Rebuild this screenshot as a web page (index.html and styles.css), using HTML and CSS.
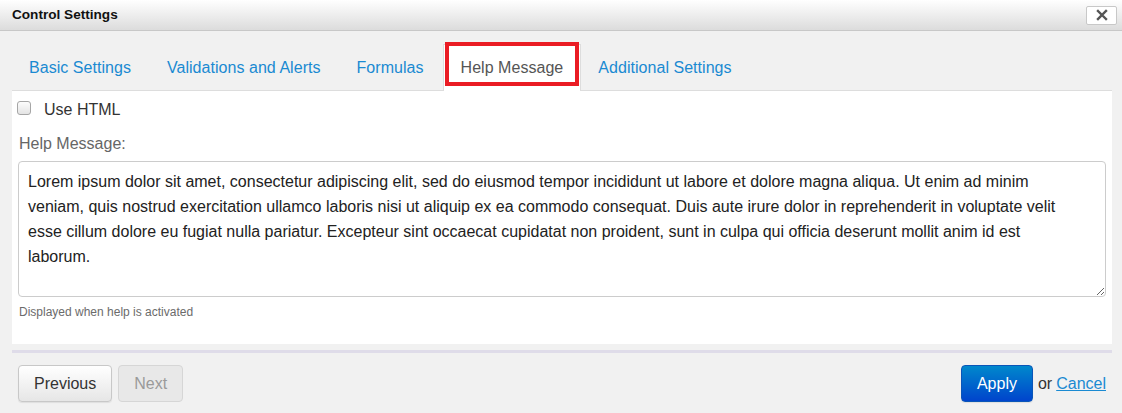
FILE: index.html
```html
<!DOCTYPE html>
<html>
<head>
<meta charset="utf-8">
<link rel="stylesheet" href="styles.css">
</head>
<body>
<div class="dialog">
  <div class="titlebar">
    <span class="title">Control Settings</span>
    <button class="close" aria-label="Close">
      <svg width="12" height="12" viewBox="0 0 12 12"><path d="M2 2 L10 10 M10 2 L2 10" stroke="#555" stroke-width="2.4" stroke-linecap="square"/></svg>
    </button>
  </div>
  <div class="content">
    <ul class="tabs">
      <li class="tab">Basic Settings</li>
      <li class="tab">Validations and Alerts</li>
      <li class="tab">Formulas</li>
      <li class="tab active">Help Message<span class="highlight"></span></li>
      <li class="tab">Additional Settings</li>
    </ul>
    <div class="panel">
      <label class="check-row"><span class="checkbox"></span><span class="check-text">Use HTML</span></label>
      <div class="field-label">Help Message:</div>
      <textarea class="message">Lorem ipsum dolor sit amet, consectetur adipiscing elit, sed do eiusmod tempor incididunt ut labore et dolore magna aliqua. Ut enim ad minim veniam, quis nostrud exercitation ullamco laboris nisi ut aliquip ex ea commodo consequat. Duis aute irure dolor in reprehenderit in voluptate velit esse cillum dolore eu fugiat nulla pariatur. Excepteur sint occaecat cupidatat non proident, sunt in culpa qui officia deserunt mollit anim id est laborum.</textarea>
      <div class="hint">Displayed when help is activated</div>
    </div>
    <div class="separator"></div>
    <div class="footer">
      <div class="nav">
        <button class="btn">Previous</button>
        <button class="btn disabled">Next</button>
      </div>
      <div class="actions">
        <button class="btn primary">Apply</button>
        <span class="or">or</span>
        <a class="cancel" href="#">Cancel</a>
      </div>
    </div>
  </div>
</div>
</body>
</html>
```

FILE: styles.css
```css
* { box-sizing: border-box; }
html, body { margin: 0; padding: 0; }
body {
  background: #f1f1f1;
  font-family: "Liberation Sans", Arial, sans-serif;
  width: 1122px;
  height: 413px;
  overflow: hidden;
}
.dialog { width: 1122px; }
.titlebar {
  height: 31px;
  background: linear-gradient(#ffffff, #dcdcdc);
  border-bottom: 1px solid #c8c8c8;
  display: flex;
  align-items: center;
  justify-content: space-between;
  padding: 0 5px 1px 12px;
}
.title {
  font-weight: bold;
  font-size: 13.6px;
  color: #111;
}
.close {
  width: 31px;
  height: 19px;
  background: #fff;
  border: 1px solid #c8c8c8;
  border-radius: 2px;
  padding: 0;
  display: flex;
  align-items: center;
  justify-content: center;
  margin-top: 1px;
}
.content { padding: 0 10px 0 12px; }
.tabs {
  list-style: none;
  margin: 13px 0 0;
  padding: 0;
  display: flex;
  align-items: flex-end;
}
.tab {
  position: relative;
  font-size: 16px;
  line-height: 20px;
  letter-spacing: 0.04px;
  padding: 13px 17px 12px;
  color: #1a8ad2;
  border: 1px solid transparent;
  border-bottom: none;
}
.tab:first-child { margin-left: -1px; }
.tab.active {
  color: #555;
  background: #fff;
  border-color: #ddd;
  margin-left: 1px;
  margin-right: -1px;
  margin-bottom: -1px;
  padding-bottom: 13px;
  z-index: 1;
}
.highlight {
  position: absolute;
  left: 1px;
  top: -3px;
  width: 134px;
  height: 44px;
  border: 4px solid #ea1c24;
}
.panel {
  background: #fff;
  border-top: 1px solid #ddd;
  padding: 8px 6px 24px;
}
.check-row {
  display: flex;
  align-items: flex-start;
  font-size: 16px;
  color: #333;
}
.checkbox {
  width: 14px;
  height: 14px;
  border: 1px solid #a6a6a6;
  border-radius: 3px;
  background: linear-gradient(#fcfcfc, #e4e4e4);
  margin: 2px 13px 0 -1px;
}
.check-text {
  line-height: 20px;
  padding-top: 1px;
}
.field-label {
  margin-top: 14px;
  font-size: 16px;
  line-height: 20px;
  color: #666;
  padding-left: 1px;
}
.message {
  display: block;
  margin-top: 7px;
  width: 100%;
  height: 136px;
  border: 1px solid #ccc;
  border-radius: 4px;
  padding: 7px 22px 7px 9px;
  font-family: "Liberation Sans", Arial, sans-serif;
  font-size: 16px;
  line-height: 25px;
  color: #222;
  resize: vertical;
}
.hint {
  margin-top: 7px;
  font-size: 12px;
  line-height: 16px;
  color: #6b6b6b;
  padding-left: 1px;
}
.separator {
  margin-top: 6px;
  height: 3px;
  background: #dfdce9;
}
.footer {
  display: flex;
  justify-content: space-between;
  align-items: center;
  padding: 12px 6px 0;
}
.nav, .actions { display: flex; align-items: center; }
.nav { gap: 6px; }
.btn {
  height: 37px;
  padding: 0 15px;
  border: 1px solid #c8c8c8;
  border-radius: 4px;
  font-family: "Liberation Sans", Arial, sans-serif;
  font-size: 16px;
  color: #333;
  background: linear-gradient(#ffffff, #e6e6e6);
  box-shadow: 0 1px 1px rgba(0,0,0,0.08);
}
.btn.disabled {
  background: #e8e8e8;
  color: #9a9a9a;
  border-color: #d6d6d6;
  box-shadow: none;
}
.btn.primary {
  color: #fff;
  background: linear-gradient(#0088cc, #0044cc);
  border-color: #0a55b8;
}
.or {
  font-size: 16px;
  color: #333;
  margin: 0 4px 0 5px;
}
.cancel {
  font-size: 16px;
  color: #1a8ad2;
  text-decoration: underline;
}
```
